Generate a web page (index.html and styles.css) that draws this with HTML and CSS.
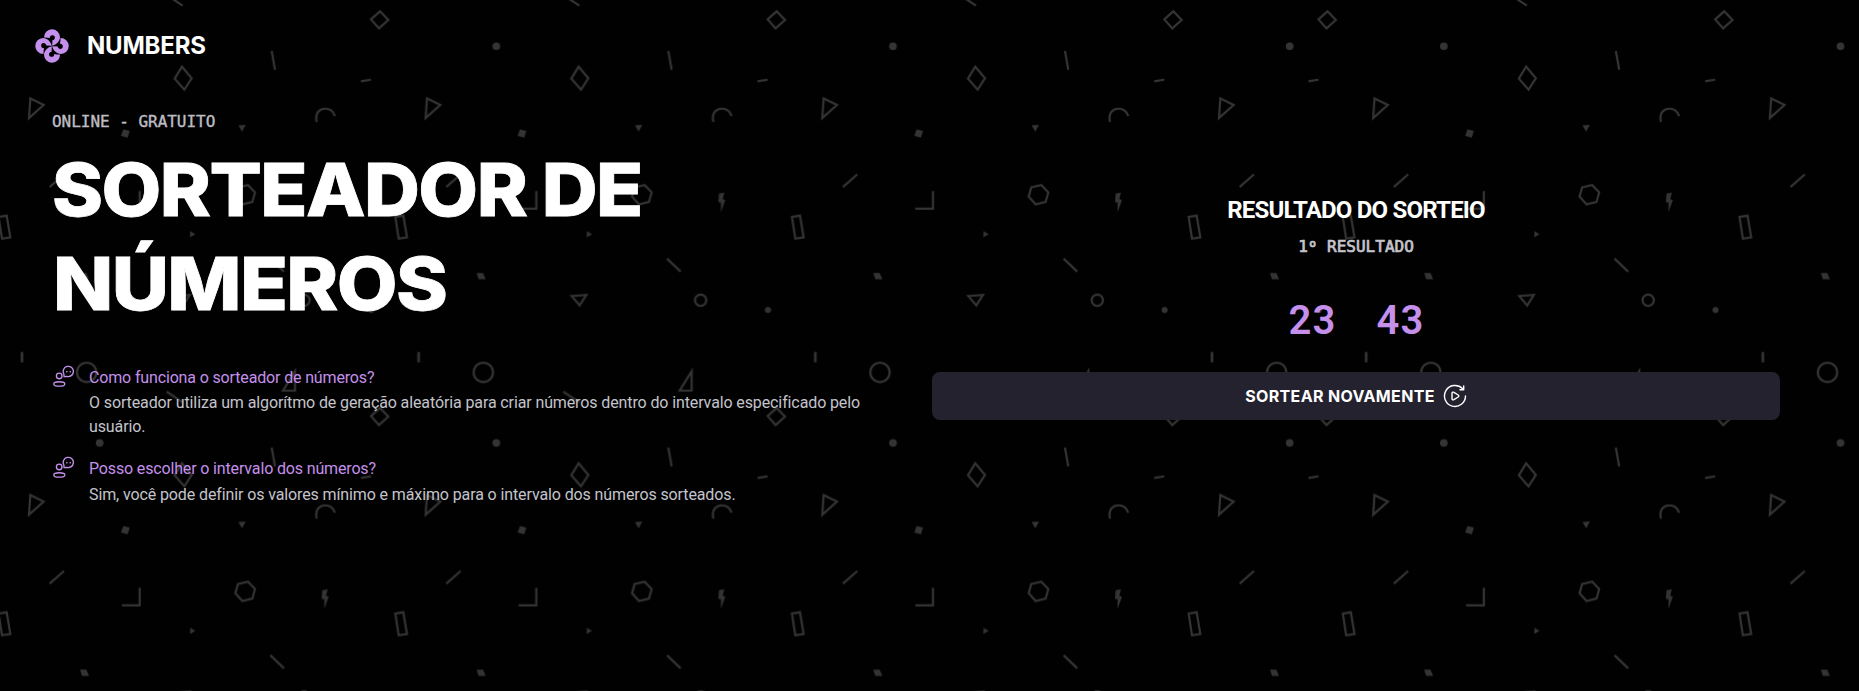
FILE: index.html
```html
<!DOCTYPE html>
<html lang="pt-BR">
<head>
<meta charset="utf-8">
<title>Numbers</title>
<link rel="stylesheet" href="styles.css">
</head>
<body>
<svg class="backdrop" width="1859" height="691" aria-hidden="true">
  <defs>
    <g id="shapes" fill="none" stroke="#343434" stroke-width="6.5">
      <path d="M500 1175L548 1207M500 -15L548 17"/>
      <path d="M1140 34L1165 60L1137 85L1113 58Z"/>
      <circle cx="299" cy="139" r="11.5" fill="#343434" stroke="none"/>
      <path d="M546 200L575 235L553 269L524 236Z"/>
      <path d="M815 153L825 209M1083 244L1113 239"/>
      <path d="M91 295L131 315L87 354Z"/>
      <path d="M950 366C944 337 960 326 976 326C990 326 1000 334 1005 348"/>
      <path d="M370 388L389 393L383 413L363 408ZM715 376L737 375L726 395ZM571 693L586 703L570 712ZM240 819L259 819L267 838L246 838Z" fill="#343434" stroke="none"/>
      <path d="M149 561L192 523M366 626H419V573M811 776L852 815"/>
      <path d="M714 562L744 555L765 577L757 606L727 613L706 590Z"/>
      <path d="M967 581L983 578L978 597L986 600L973 636L973 608L965 606Z" fill="#343434" stroke="none"/>
      <path d="M1186 651L1210 647L1221 712L1196 716ZM-4 651L20 647L31 712L6 716Z"/>
      <path d="M525 888L569 885L549 916Z"/>
      <circle cx="912" cy="901" r="17"/>
      <circle cx="1114" cy="930" r="9" fill="#343434" stroke="none"/>
      <path d="M66 1056V1087" stroke-width="8"/>
      <circle cx="260" cy="1117" r="29"/>
      <path d="M885 1114V1172H849Z"/>
    </g>
    <pattern id="tile-a" width="1190" height="1190" patternUnits="userSpaceOnUse" patternTransform="scale(.33333)"><use href="#shapes"/></pattern>
    <pattern id="tile-b" width="1190" height="1190" patternUnits="userSpaceOnUse" patternTransform="translate(154.2 0) scale(.33333)"><use href="#shapes"/></pattern>
  </defs>
  <rect width="1300" height="691" fill="url(#tile-a)"/>
  <rect x="1300" width="559" height="691" fill="url(#tile-b)"/>
</svg>

<svg class="sprite" aria-hidden="true">
  <symbol id="faq" viewBox="0 0 22 22">
    <g fill="none" stroke="currentColor" stroke-width="1.35" stroke-linecap="round" stroke-linejoin="round">
      <circle cx="7.2" cy="10.9" r="2.8"/>
      <ellipse cx="7.3" cy="18.9" rx="5.5" ry="2.2"/>
      <path d="M12.1 11.6L11.8 8.8A5.1 5.1 0 1 1 14.8 11.3Z"/>
      <path d="M14.8 6.8h.1M18.2 6.8h.1" stroke-width="1.6"/>
    </g>
  </symbol>
</svg>

<header class="header">
  <svg class="logo" viewBox="0 0 34 34" aria-hidden="true">
    <defs><path id="petal" d="M9 8.5A8 8 0 0 1 25 8C25 12.5 21 16 17.2 16.8L17.4 11.3C20.3 11.1 21 7 18 6.2C16 5.8 14.7 7.1 14.8 9.1C13 8.6 11 8.4 9 8.5Z"/></defs>
    <g fill="currentColor">
      <use href="#petal"/>
      <use href="#petal" transform="rotate(90 17 17)"/>
      <use href="#petal" transform="rotate(180 17 17)"/>
      <use href="#petal" transform="rotate(270 17 17)"/>
    </g>
  </svg>
  <span class="brand">NUMBERS</span>
</header>

<main class="main">
  <section class="intro">
    <p class="tagline">ONLINE - GRATUITO</p>
    <h1 class="title"><span class="title-line">SORTEADOR DE</span> <span class="title-line title-second">NÚMEROS</span></h1>
    <ul class="faq">
      <li class="faq-item">
        <svg class="faq-icon"><use href="#faq"/></svg>
        <div>
          <h2 class="question">Como funciona o sorteador de números?</h2>
          <p class="answer">O sorteador utiliza um algorítmo de geração aleatória para criar números dentro do intervalo especificado pelo usuário.</p>
        </div>
      </li>
      <li class="faq-item">
        <svg class="faq-icon"><use href="#faq"/></svg>
        <div>
          <h2 class="question">Posso escolher o intervalo dos números?</h2>
          <p class="answer">Sim, você pode definir os valores mínimo e máximo para o intervalo dos números sorteados.</p>
        </div>
      </li>
    </ul>
  </section>

  <section class="result">
    <h2 class="result-title">RESULTADO DO SORTEIO</h2>
    <p class="result-count">1<span class="ordinal">º</span> RESULTADO</p>
    <div class="numbers"><span>23</span><span>43</span></div>
    <button class="again" type="button">
      <span class="again-label">SORTEAR NOVAMENTE</span>
      <svg class="again-icon" viewBox="0 0 24 24" fill="none" stroke="currentColor" stroke-width="1.4" stroke-linecap="round" stroke-linejoin="round" aria-hidden="true">
        <path d="M22.5 12A10.5 10.5 0 1 1 19.4 4.5"/>
        <path d="M20.7 2v3.7H17"/>
        <path d="M9 9.3C9 8.3 10 7.8 10.9 8.3L15.2 11C16 11.5 16 12.5 15.2 13L10.9 15.7C10 16.2 9 15.7 9 14.7Z"/>
      </svg>
    </button>
  </section>
</main>
</body>
</html>
```
FILE: styles.css
```css
* { box-sizing: border-box; margin: 0; padding: 0; }

body {
  min-height: 691px;
  overflow: hidden;
  background: #010101;
  color: #fff;
  font-family: Roboto, "Liberation Sans", sans-serif;
  font-size: 16px;
}

.backdrop { position: absolute; inset: 0; z-index: -1; }
.sprite { position: absolute; width: 0; height: 0; }

.header {
  display: flex;
  align-items: center;
  gap: 18px;
  height: 92px;
  padding-left: 35px;
}
.logo { width: 34px; height: 34px; color: #c490eb; }
.brand { font: 700 24px/30px Inter, sans-serif; letter-spacing: -0.2px; }

.main {
  display: grid;
  grid-template-columns: 848px 848px;
  gap: 32px;
  padding-left: 52px;
}

.intro { padding-top: 18px; }
.tagline {
  font: 400 16px/24px "DejaVu Sans Mono", monospace;
  letter-spacing: -0.03px;
  color: #bcbcc3;
  -webkit-text-stroke: 0.4px #bcbcc3;
}
.title {
  margin-top: 9px;
  font: 800 73px/94px Inter, sans-serif;
  letter-spacing: -1.5px;
  -webkit-text-stroke: 0.8px #fff;
}
.title-line { display: block; width: max-content; transform: scaleX(1.061); transform-origin: left; }
.title-second { padding-left: 1px; transform: scaleX(1.078); }

.faq { display: grid; gap: 17px; margin-top: 34px; list-style: none; }
.faq-item { display: flex; gap: 15px; }
.faq-icon { flex: none; width: 22px; height: 22px; color: #c490eb; }
.question { padding-top: 1px; font-size: 16px; font-weight: 400; line-height: 24px; letter-spacing: -0.15px; color: #c490eb; }
.answer { margin-top: 1px; line-height: 24px; letter-spacing: -0.115px; color: #c4c4cc; }
.faq-item:last-child .answer { margin-top: 2px; }

.result { display: flex; flex-direction: column; align-items: center; padding-top: 102px; }
.result-title { font-size: 24px; line-height: 32px; letter-spacing: -0.8px; }
.result-count {
  margin-top: 9px;
  font: 400 16px/24px "DejaVu Sans Mono", monospace;
  color: #c4c4cc;
  -webkit-text-stroke: 0.7px #c4c4cc;
}
.ordinal { display: inline-block; width: 9.6px; font-family: Roboto, sans-serif; text-align: center; }
.numbers {
  display: flex;
  gap: 40px;
  margin-top: 35px;
  padding-left: 1px;
  font-size: 40px;
  font-weight: 600;
  line-height: 54px;
  letter-spacing: 1.2px;
  color: #c490eb;
}
.again {
  display: flex;
  align-items: center;
  justify-content: center;
  gap: 8px;
  width: 848px;
  height: 48px;
  margin-top: 24px;
  border: 0;
  border-radius: 8px;
  background: #25222f;
  color: #fff;
  font: 700 16px/24px Inter, sans-serif;
  letter-spacing: 0.35px;
}
.again-icon { width: 24px; height: 24px; }
```
